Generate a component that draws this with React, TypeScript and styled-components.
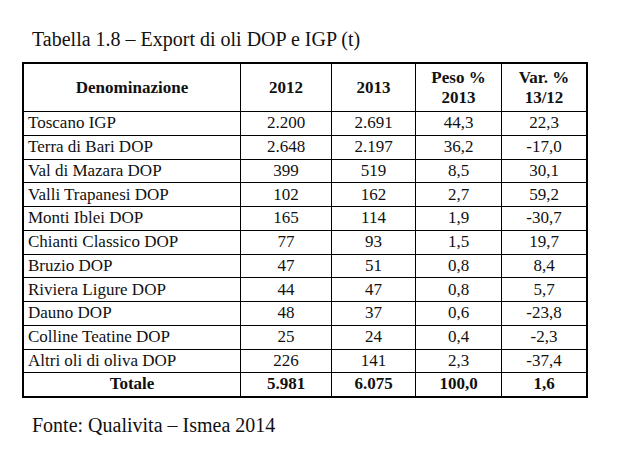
import styled, { createGlobalStyle } from "styled-components";

const GlobalStyle = createGlobalStyle`
	body {
		margin: 0;
		background: #ffffff;
		color: #111111;
		font-family: "Liberation Serif", "Times New Roman", serif;
	}
`;

const Page = styled.div`
	width: 630px;
	height: 464px;
	padding: 27px 0 0 22px;
	box-sizing: border-box;
`;

const Caption = styled.div`
	font-size: 20px;
	line-height: 24px;
	padding-left: 10px;
	white-space: nowrap;
`;

const Table = styled.table`
	margin-top: 11px;
	border-collapse: collapse;
	border: 2px solid #000;
	table-layout: fixed;
	width: 564px;
	font-family: "Liberation Serif", "Times New Roman", serif;
	font-size: 17px;
	color: #111111;
`;

const HeadCell = styled.th<{ $width: number }>`
	width: ${props => props.$width}px;
	height: 47px;
	border: 1px solid #000;
	padding: 0;
	font-weight: bold;
	line-height: 20px;
	text-align: center;
	vertical-align: middle;
`;

const Row = styled.tr`
	height: 23.75px;
`;

const Cell = styled.td<{ $left?: boolean; $bold?: boolean }>`
	border: 1px solid #000;
	padding: 0 4px;
	line-height: 20px;
	white-space: nowrap;
	text-align: ${props => (props.$left ? "left" : "center")};
	font-weight: ${props => (props.$bold ? "bold" : "normal")};
`;

const Source = styled.div`
	margin-top: 15px;
	padding-left: 10px;
	font-size: 20px;
	line-height: 24px;
`;

const rows: [string, string, string, string, string][] = [
	["Toscano IGP", "2.200", "2.691", "44,3", "22,3"],
	["Terra di Bari DOP", "2.648", "2.197", "36,2", "-17,0"],
	["Val di Mazara DOP", "399", "519", "8,5", "30,1"],
	["Valli Trapanesi DOP", "102", "162", "2,7", "59,2"],
	["Monti Iblei DOP", "165", "114", "1,9", "-30,7"],
	["Chianti Classico DOP", "77", "93", "1,5", "19,7"],
	["Bruzio DOP", "47", "51", "0,8", "8,4"],
	["Riviera Ligure DOP", "44", "47", "0,8", "5,7"],
	["Dauno DOP", "48", "37", "0,6", "-23,8"],
	["Colline Teatine DOP", "25", "24", "0,4", "-2,3"],
	["Altri oli di oliva DOP", "226", "141", "2,3", "-37,4"],
];

function App() {
	return (
		<Page>
			<GlobalStyle />
			<Caption>Tabella 1.8 – Export di oli DOP e IGP (t)</Caption>
			<Table>
				<thead>
					<tr>
						<HeadCell $width={216}>Denominazione</HeadCell>
						<HeadCell $width={90}>2012</HeadCell>
						<HeadCell $width={83}>2013</HeadCell>
						<HeadCell $width={85}>
							Peso %
							<br />
							2013
						</HeadCell>
						<HeadCell $width={84}>
							Var. %
							<br />
							13/12
						</HeadCell>
					</tr>
				</thead>
				<tbody>
					{rows.map(r => (
						<Row key={r[0]}>
							<Cell $left>{r[0]}</Cell>
							<Cell>{r[1]}</Cell>
							<Cell>{r[2]}</Cell>
							<Cell>{r[3]}</Cell>
							<Cell>{r[4]}</Cell>
						</Row>
					))}
					<Row>
						<Cell $bold>Totale</Cell>
						<Cell $bold>5.981</Cell>
						<Cell $bold>6.075</Cell>
						<Cell $bold>100,0</Cell>
						<Cell $bold>1,6</Cell>
					</Row>
				</tbody>
			</Table>
			<Source>Fonte: Qualivita – Ismea 2014</Source>
		</Page>
	);
}

export default App;
